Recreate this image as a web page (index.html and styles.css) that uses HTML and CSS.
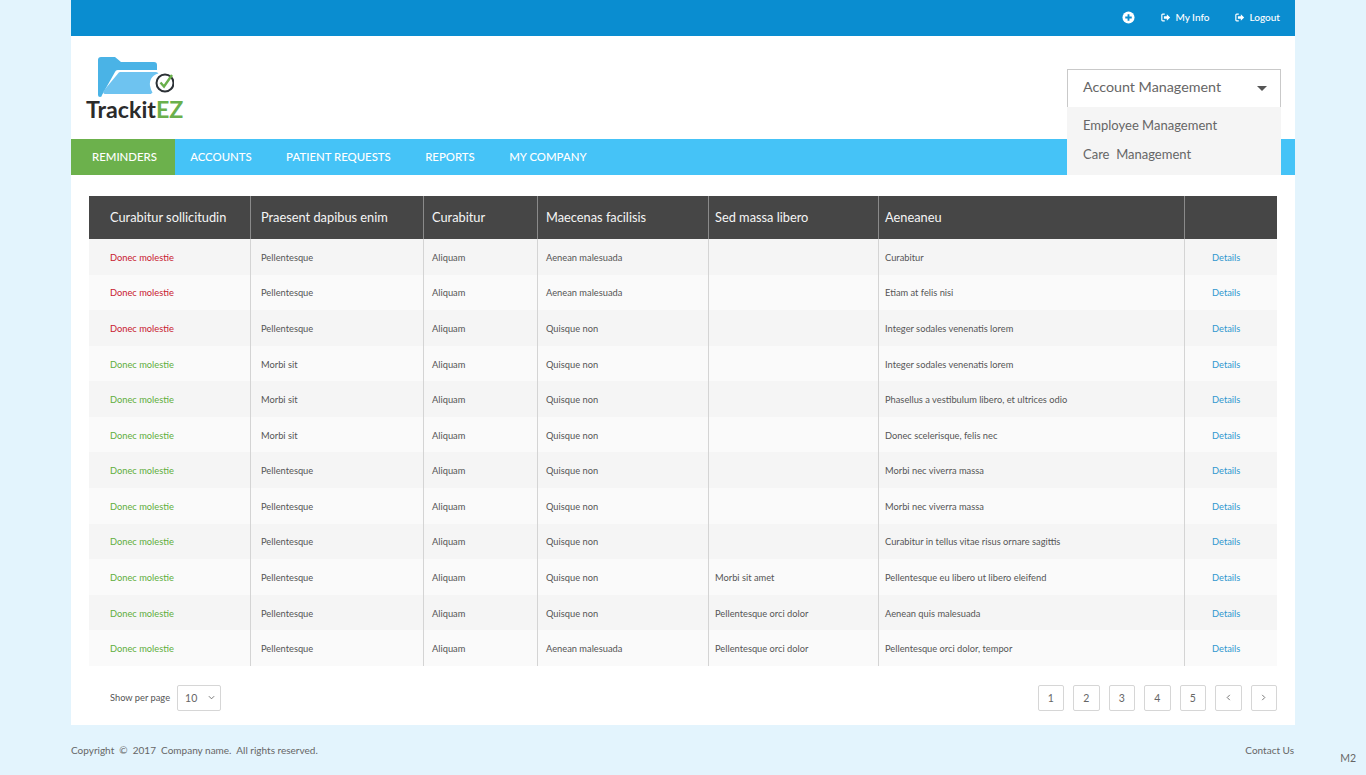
FILE: index.html
```html
<!DOCTYPE html>
<html lang="en">
<head>
<meta charset="utf-8">
<title>TrackitEZ</title>
<link rel="stylesheet" href="styles.css">
</head>
<body>
<div class="page">
  <div class="topbar">
    <svg class="plus" viewBox="0 0 14 14" width="13" height="13"><circle cx="7" cy="7" r="6.5" fill="#fff"/><path d="M7 3.5v7M3.5 7h7" stroke="#0a8dd0" stroke-width="2"/></svg>
    <a class="toplink myinfo"><svg class="signout" viewBox="0 0 12 10" width="10" height="9"><path d="M4.5 1H2a1 1 0 0 0-1 1v6a1 1 0 0 0 1 1h2.500" fill="none" stroke="#fff" stroke-width="1.400"/><path d="M3.500 3.500h3.500V1l4 4-4 4V6.500H3.500z" fill="#fff"/></svg>My Info</a>
    <a class="toplink"><svg class="signout" viewBox="0 0 12 10" width="10" height="9"><path d="M4.500 1H2a1 1 0 0 0-1 1v6a1 1 0 0 0 1 1h2.500" fill="none" stroke="#fff" stroke-width="1.400"/><path d="M3.500 3.500h3.500V1l4 4-4 4V6.500H3.500z" fill="#fff"/></svg>Logout</a>
  </div>
  <header class="header">
    <div class="logo">
      <svg class="logo-mark" viewBox="0 0 80 44" width="80" height="44">
        <path d="M4 38V3a3 3 0 0 1 3-3h14l6 5h33a3 3 0 0 1 3 3v5H24a3 3 0 0 0-3 2L8 38a2 2 0 0 1-4 0z" fill="#4ab3e6"/>
        <path d="M26 15h36a3 3 0 0 1 2.500 1.500c-7 1.500-10 8-8 14 .4 2 1.200 3.500 2 5-.6.800-1.500 1.500-2.500 1.500H11a2 2 0 0 1-1.500-3L24 16.500a3 3 0 0 1 2-1.500z" fill="#6ec3f0"/>
        <circle cx="71" cy="26" r="8.500" fill="#fff" stroke="#2c3136" stroke-width="2"/>
        <path d="M66.500 25.500l3.500 4L78 18" fill="none" stroke="#6ab04c" stroke-width="2.400"/>
      </svg>
      <div class="logo-text">Trackit<span class="logo-ez">EZ</span></div>
    </div>
    <div class="acct">
      <div class="acct-btn">Account Management<span class="caret"></span></div>
      <div class="acct-menu">
        <a class="acct-item">Employee Management</a>
        <a class="acct-item">Care&nbsp; Management</a>
      </div>
    </div>
  </header>
  <nav class="nav">
    <a class="nav-item active">REMINDERS</a>
    <a class="nav-item">ACCOUNTS</a>
    <a class="nav-item">PATIENT REQUESTS</a>
    <a class="nav-item">REPORTS</a>
    <a class="nav-item">MY COMPANY</a>
  </nav>
  <main class="content">
    <table class="grid">
      <colgroup>
        <col class="c1"><col class="c2"><col class="c3"><col class="c4"><col class="c5"><col class="c6"><col class="c7">
      </colgroup>
      <thead>
        <tr>
          <th class="first">Curabitur sollicitudin</th>
          <th>Praesent dapibus enim</th>
          <th>Curabitur</th>
          <th>Maecenas facilisis</th>
          <th>Sed massa libero</th>
          <th>Aeneaneu</th>
          <th></th>
        </tr>
      </thead>
      <tbody>
        <tr><td class="first red">Donec molestie</td><td>Pellentesque</td><td>Aliquam</td><td>Aenean malesuada</td><td></td><td>Curabitur</td><td class="det"><a>Details</a></td></tr>
        <tr><td class="first red">Donec molestie</td><td>Pellentesque</td><td>Aliquam</td><td>Aenean malesuada</td><td></td><td>Etiam at felis nisi</td><td class="det"><a>Details</a></td></tr>
        <tr><td class="first red">Donec molestie</td><td>Pellentesque</td><td>Aliquam</td><td>Quisque non</td><td></td><td>Integer sodales venenatis lorem</td><td class="det"><a>Details</a></td></tr>
        <tr><td class="first green">Donec molestie</td><td>Morbi sit</td><td>Aliquam</td><td>Quisque non</td><td></td><td>Integer sodales venenatis lorem</td><td class="det"><a>Details</a></td></tr>
        <tr><td class="first green">Donec molestie</td><td>Morbi sit</td><td>Aliquam</td><td>Quisque non</td><td></td><td>Phasellus a vestibulum libero, et ultrices odio</td><td class="det"><a>Details</a></td></tr>
        <tr><td class="first green">Donec molestie</td><td>Morbi sit</td><td>Aliquam</td><td>Quisque non</td><td></td><td>Donec scelerisque, felis nec</td><td class="det"><a>Details</a></td></tr>
        <tr><td class="first green">Donec molestie</td><td>Pellentesque</td><td>Aliquam</td><td>Quisque non</td><td></td><td>Morbi nec viverra massa</td><td class="det"><a>Details</a></td></tr>
        <tr><td class="first green">Donec molestie</td><td>Pellentesque</td><td>Aliquam</td><td>Quisque non</td><td></td><td>Morbi nec viverra massa</td><td class="det"><a>Details</a></td></tr>
        <tr><td class="first green">Donec molestie</td><td>Pellentesque</td><td>Aliquam</td><td>Quisque non</td><td></td><td>Curabitur in tellus vitae risus ornare sagittis</td><td class="det"><a>Details</a></td></tr>
        <tr><td class="first green">Donec molestie</td><td>Pellentesque</td><td>Aliquam</td><td>Quisque non</td><td>Morbi sit amet</td><td>Pellentesque eu libero ut libero eleifend</td><td class="det"><a>Details</a></td></tr>
        <tr><td class="first green">Donec molestie</td><td>Pellentesque</td><td>Aliquam</td><td>Quisque non</td><td>Pellentesque orci dolor</td><td>Aenean quis malesuada</td><td class="det"><a>Details</a></td></tr>
        <tr><td class="first green">Donec molestie</td><td>Pellentesque</td><td>Aliquam</td><td>Aenean malesuada</td><td>Pellentesque orci dolor</td><td>Pellentesque orci dolor, tempor</td><td class="det"><a>Details</a></td></tr>
      </tbody>
    </table>
    <div class="pager-row">
      <div class="perpage">
        <span>Show per page</span>
        <div class="select">10<svg class="chev" viewBox="0 0 8 5" width="7" height="5"><path d="M1 1l3 3 3-3" fill="none" stroke="#666" stroke-width="1"/></svg></div>
      </div>
      <div class="pager">
        <a class="page-btn">1</a><a class="page-btn">2</a><a class="page-btn">3</a><a class="page-btn">4</a><a class="page-btn">5</a>
        <a class="page-btn"><svg viewBox="0 0 5 8" width="5" height="7"><path d="M4 1L1 4l3 3" fill="none" stroke="#666" stroke-width="1"/></svg></a>
        <a class="page-btn"><svg viewBox="0 0 5 8" width="5" height="7"><path d="M1 1l3 3-3 3" fill="none" stroke="#666" stroke-width="1"/></svg></a>
      </div>
    </div>
  </main>
  <footer class="footer">
    <span>Copyright &nbsp;©&nbsp; 2017 &nbsp;Company name. &nbsp;All rights reserved.</span>
    <a>Contact Us</a>
  </footer>
</div>
<div class="version">M2</div>
</body>
</html>
```
FILE: styles.css
```css
* { box-sizing: border-box; }
html, body { margin: 0; padding: 0; }
body {
  height: 775px;
  overflow: hidden;
  background: #e3f4fd;
  font-family: Lato, "Open Sans", sans-serif;
  color: #555;
  position: relative;
}
.page { width: 1224px; margin-left: 71px; }

.topbar {
  height: 36px;
  background: #0a8dd0;
  display: flex;
  align-items: center;
  justify-content: flex-end;
  padding: 0 15px 2px 0;
  color: #fff;
  font-size: 10px;
  font-weight: 500;
}
.plus { margin-right: 26px; }
.toplink { display: flex; align-items: center; gap: 4px; color: #fff; }
.myinfo { margin-right: 26px; }

.header {
  height: 103px;
  background: #fff;
  position: relative;
  padding: 21px 0 0 15px;
}
.logo { width: 100px; }
.logo-mark { display: block; margin-left: 8px; }
.logo-text {
  font-size: 23.200px;
  line-height: 22px;
  font-weight: 700;
  color: #2b2b2b;
  margin-top: -3px;
  white-space: nowrap;
}
.logo-ez { color: #6ab04c; }

.acct { position: absolute; left: 996px; top: 33px; width: 214px; z-index: 2; }
.acct-btn {
  height: 38px;
  background: #fff;
  border: 1px solid #c9c9c9;
  border-bottom: 0;
  padding: 0 13px 4px 15px;
  display: flex;
  align-items: center;
  justify-content: space-between;
  font-size: 14.300px;
  color: #666;
}
.caret {
  width: 0; height: 0;
  border-left: 5px solid transparent;
  border-right: 5px solid transparent;
  border-top: 5px solid #555;
  margin-top: 4px;
}
.acct-menu { height: 68px; background: #f5f5f5; padding-top: 4px; }
.acct-item {
  display: block;
  height: 28.500px;
  line-height: 28.500px;
  padding-left: 16px;
  font-size: 13px;
  color: #666;
}

.nav {
  height: 36px;
  background: #45c3f7;
  display: flex;
}
.nav-item {
  display: flex;
  align-items: center;
  padding: 0 17.200px 1px;
  font-size: 11.400px;
  font-weight: 500;
  color: #fff;
}
.nav-item.active {
  background: #6cb14c;
  padding: 0 18px 1px 21px;
  margin-right: -2px;
}

.content { height: 550px; background: #fff; padding: 21px 18px 0; }
.grid { width: 1188px; table-layout: fixed; border-collapse: separate; border-spacing: 0; }
.c1 { width: 162px; }
.c2 { width: 173px; }
.c3 { width: 114px; }
.c4 { width: 171px; }
.c5 { width: 170px; }
.c6 { width: 306px; }
.c7 { width: 92px; }

.grid th {
  height: 43px;
  background: #464646;
  color: #f5f5f5;
  font-size: 12.800px;
  font-weight: 400;
  text-align: left;
  padding: 0 6px 1px 10px;
  border-right: 1px solid #8a8a8a;
  white-space: nowrap;
}
.grid td {
  height: 35.580px;
  padding: 1px 6px 0 10px;
  font-size: 9.300px;
  color: #555;
  border-right: 1px solid #d4d4d4;
  white-space: nowrap;
}
.grid th:last-child, .grid td:last-child { border-right: 0; }
.grid th:nth-child(n+3):nth-child(-n+4), .grid td:nth-child(n+3):nth-child(-n+4) { padding-left: 8px; }
.grid th:nth-child(5), .grid td:nth-child(5) { padding-left: 6px; }
.grid th:nth-child(6), .grid td:nth-child(6) { padding-left: 6px; }
.grid th.first, .grid td.first { padding-left: 21px; }
.grid tbody tr:nth-child(odd) { background: #f5f5f5; }
.grid tbody tr:nth-child(even) { background: #fafafa; }
.grid td.red { color: #c8202f; }
.grid td.green { color: #5fae3c; }
.grid td.det { color: #2f97cf; padding-left: 27px; }

.pager-row {
  display: flex;
  justify-content: space-between;
  align-items: center;
  margin-top: 19px;
}
.perpage {
  display: flex;
  align-items: center;
  gap: 7px;
  padding-left: 21px;
  font-size: 9.300px;
  color: #555;
}
.select {
  width: 44px;
  height: 26px;
  border: 1px solid #d6d6d6;
  border-radius: 2px;
  display: flex;
  align-items: center;
  justify-content: space-between;
  padding: 0 5px 0 7px;
  font-size: 10.500px;
  color: #666;
}
.pager { display: flex; gap: 9px; }
.page-btn {
  width: 26.500px;
  height: 26px;
  border: 1px solid #d6d6d6;
  border-radius: 2px;
  display: flex;
  align-items: center;
  justify-content: center;
  font-size: 10.500px;
  color: #666;
}

.footer {
  height: 50px;
  display: flex;
  justify-content: space-between;
  align-items: center;
  padding-right: 1px;
  font-size: 10px;
  color: #666;
}
.version {
  position: absolute;
  right: 10px;
  top: 752px;
  font-size: 10.500px;
  color: #666;
}
```
